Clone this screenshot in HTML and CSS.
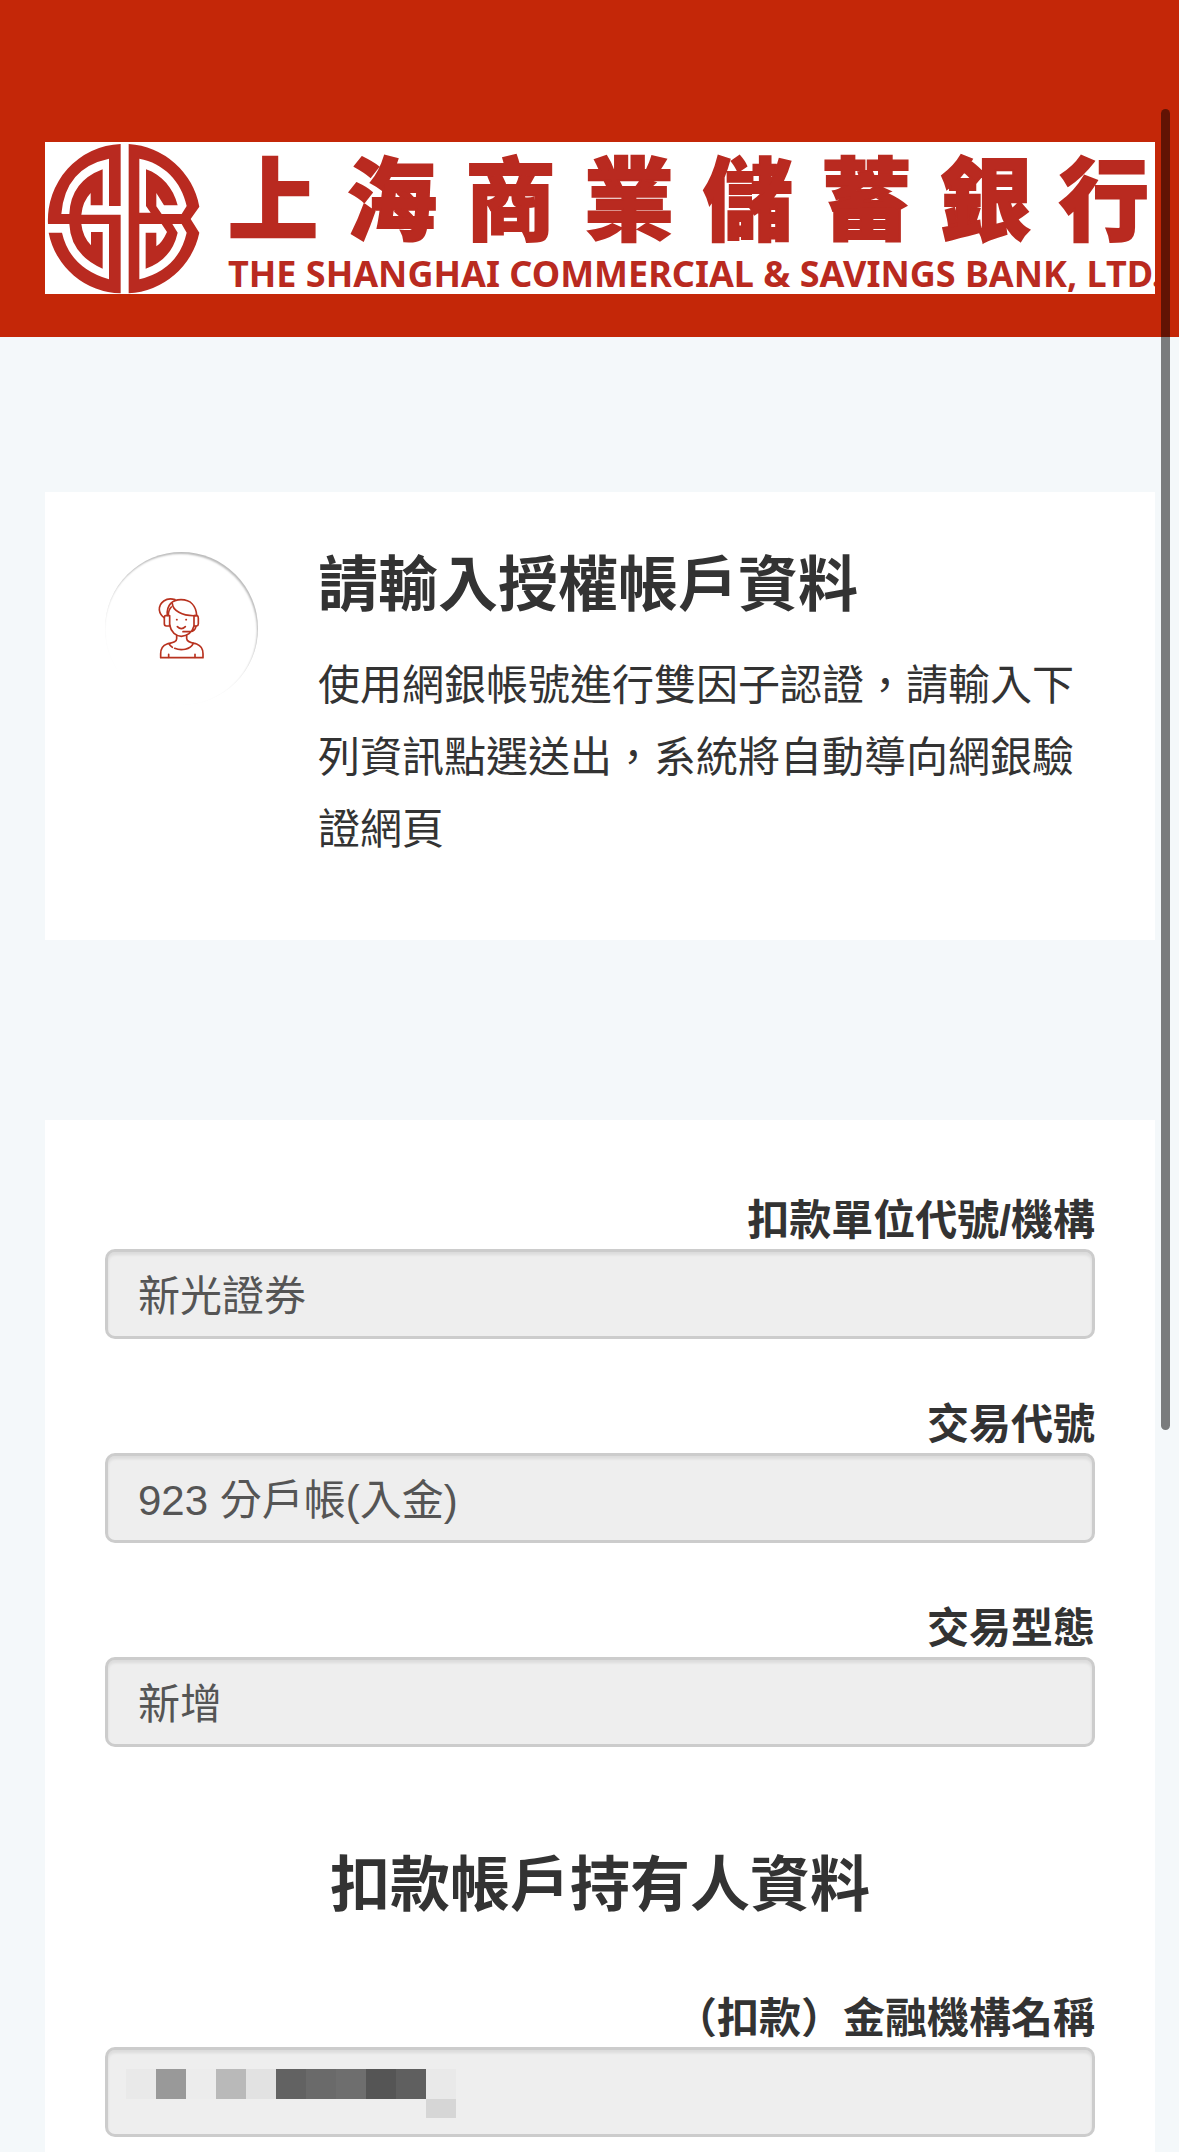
FILE: index.html
```html
<!DOCTYPE html>
<html lang="zh-Hant">
<head>
<meta charset="utf-8">
<meta name="viewport" content="width=device-width, initial-scale=1">
<title>上海商業儲蓄銀行</title>
<link rel="stylesheet" href="styles.css">
</head>
<body>
<header class="site-header">
  <div class="brand">
    <svg class="brand-emblem" viewBox="15 12 468 456" aria-hidden="true">
      <path fill="#b92a20" d="M242 18A228 228 0 0 0 24 258H88Q92 350 188 392V282H153V322Q128 296 124 258H207V424Q90 390 66 284H26A225 225 0 0 0 242 466V230H124Q128 190 152 165V202H188V94Q92 130 88 228H64Q75 90 207 62V204H242Z"/>
      <path fill="#b92a20" d="M266 18A230 230 0 0 1 478 206L452 243L478 284A230 230 0 0 1 266 466Z"/>
      <path fill="#fff" d="M298 62C370 75 425 130 440 204L425 228H365L349 205V165L372 202H413C400 150 365 110 318 94V204L332 224H298ZM298 258H365L381 282Q366 315 349 325V284H317V392Q395 365 413 284L397 258H425L440 284Q415 395 298 424Z"/>
    </svg>
    <div class="brand-words">
      <div class="brand-name"><span>上</span><span>海</span><span>商</span><span>業</span><span>儲</span><span>蓄</span><span>銀</span><span>行</span></div>
      <div class="brand-latin">THE SHANGHAI COMMERCIAL &amp; SAVINGS BANK, LTD.</div>
    </div>
  </div>
</header>
<main class="content">
  <section class="card intro">
    <div class="intro-icon">
      <svg viewBox="0 0 186 228" width="62" height="76" fill="none" stroke="#b8321f" stroke-width="5" stroke-linejoin="round" stroke-linecap="round" aria-hidden="true">
        <path d="M72 26C46 18 24 34 25 57Q27 72 40 80"/>
        <path d="M49 73C46 42 64 26 90 26C119 26 135 45 137 73"/>
        <path d="M64 38C65 57 92 76 134 74M61 48Q52 57 52 73"/>
        <path d="M53 74H44Q40 74 40 80V98Q40 104 46 105H56V74M131 74H138Q142 75 142 82V98Q142 104 137 105H129V74"/>
        <path d="M56 102C60 124 75 136 91 136C107 136 124 125 129 105M135 106Q132 121 118 122H96"/>
        <path d="M79 107Q91 119 103 107M77 86H78M105 86H106"/>
        <path d="M77 134V143C77 154 63 155 48 159C34 164 29 174 29 188V200H156V188C156 173 150 164 137 159C122 155 108 154 107 143V134"/>
        <path d="M54 158Q58 166 64 169M71 172C90 180 118 176 127 157M53 199V190M132 199V190"/>
      </svg>
    </div>
    <div class="intro-text">
      <h1 class="title">請輸入授權帳戶資料</h1>
      <p class="lead">使用網銀帳號進行雙因子認證，請輸入下列資訊點選送出，系統將自動導向網銀驗證網頁</p>
    </div>
  </section>
  <form class="card form">
    <div class="field">
      <label for="unit">扣款單位代號/機構</label>
      <input id="unit" type="text" value="新光證券" readonly>
    </div>
    <div class="field">
      <label for="code">交易代號</label>
      <input id="code" type="text" value="923 分戶帳(入金)" readonly>
    </div>
    <div class="field">
      <label for="kind">交易型態</label>
      <input id="kind" type="text" value="新增" readonly>
    </div>
    <h2 class="title form-title">扣款帳戶持有人資料</h2>
    <div class="field">
      <label for="bank">（扣款）金融機構名稱</label>
      <input id="bank" type="text" readonly>
      <svg class="mask" viewBox="0 0 330 50" width="330" height="50" shape-rendering="crispEdges" aria-hidden="true">
        <path fill="#e9e9e9" d="M0 0h30v30H0zM300 0h30v30h-30z"/>
        <path fill="#999" d="M30 0h30v30H30z"/>
        <path fill="#ececec" d="M60 0h30v30H60z"/>
        <path fill="#b9b9b9" d="M90 0h30v30H90z"/>
        <path fill="#e2e2e2" d="M120 0h30v30h-30z"/>
        <path fill="#626262" d="M150 0h30v30h-30z"/>
        <path fill="#6a6a6a" d="M180 0h30v30h-30z"/>
        <path fill="#6e6e6e" d="M210 0h30v30h-30z"/>
        <path fill="#555" d="M240 0h30v30h-30z"/>
        <path fill="#5f5f5f" d="M270 0h30v30h-30z"/>
        <path fill="#d6d6d6" d="M300 30h30v19h-30z"/>
      </svg>
    </div>
  </form>
</main>
<div class="scroll-thumb"></div>
</body>
</html>
```

FILE: styles.css
```css
* {
  box-sizing: border-box;
}

body {
  margin: 0;
  background: #f4f8fa;
  color: #333;
  font-family: "Liberation Sans", "Noto Sans CJK TC", sans-serif;
  font-size: 42px;
}

.site-header {
  padding: 142px 24px 43px 45px;
  background: #c42708;
}

.brand {
  display: flex;
  height: 152px;
  background: #fff;
  color: #b92a20;
}

.brand-emblem {
  flex: none;
  width: 156px;
  height: 152px;
}

.brand-words {
  flex: 1;
  min-width: 0;
  padding-left: 27px;
}

.brand-name {
  display: flex;
  justify-content: space-between;
  padding-right: 6px;
  font-family: "Noto Sans CJK TC", sans-serif;
  font-size: 90px;
  font-weight: 900;
  line-height: 104px;
  -webkit-text-stroke: 2px #b92a20;
}

.brand-latin {
  margin-top: 8px;
  overflow: hidden;
  font-family: "Noto Sans", sans-serif;
  font-size: 36px;
  font-weight: 700;
  line-height: 40px;
  white-space: nowrap;
}

.content {
  display: flex;
  flex-direction: column;
  gap: 180px;
  padding: 155px 24px 0 45px;
}

.card {
  background: #fff;
}

.intro {
  display: flex;
  gap: 60px;
  padding: 60px;
}

.intro-icon {
  display: flex;
  flex: none;
  align-items: center;
  justify-content: center;
  width: 153px;
  height: 153px;
  border-radius: 50%;
  box-shadow: inset -1px 2px 2px #bbb;
}

.title {
  margin: 0;
  font-size: 60px;
  font-weight: 700;
  line-height: 68px;
}

.lead {
  margin: 30px 0 14px;
  line-height: 72px;
}

.form {
  padding: 73px 60px 16px;
}

.field {
  position: relative;
  margin-bottom: 58px;
}

.field:last-child {
  margin-bottom: 0;
}

.field label {
  display: block;
  font-weight: 700;
  line-height: 56px;
  text-align: right;
}

.field input {
  display: block;
  width: 100%;
  height: 90px;
  padding: 0 30px 4px;
  border: 3px solid #ccc;
  border-radius: 10px;
  background: #eee;
  box-shadow: inset 0 3px 3px rgba(0, 0, 0, 0.08);
  color: #555;
  font: inherit;
}

.form-title {
  margin: 97px 0 63px;
  line-height: 84px;
  text-align: center;
}

.mask {
  position: absolute;
  top: 78px;
  left: 21px;
}

.scroll-thumb {
  position: absolute;
  top: 109px;
  right: 9px;
  width: 9px;
  height: 1321px;
  border-radius: 5px;
  background: rgba(0, 0, 0, 0.5);
}
```
